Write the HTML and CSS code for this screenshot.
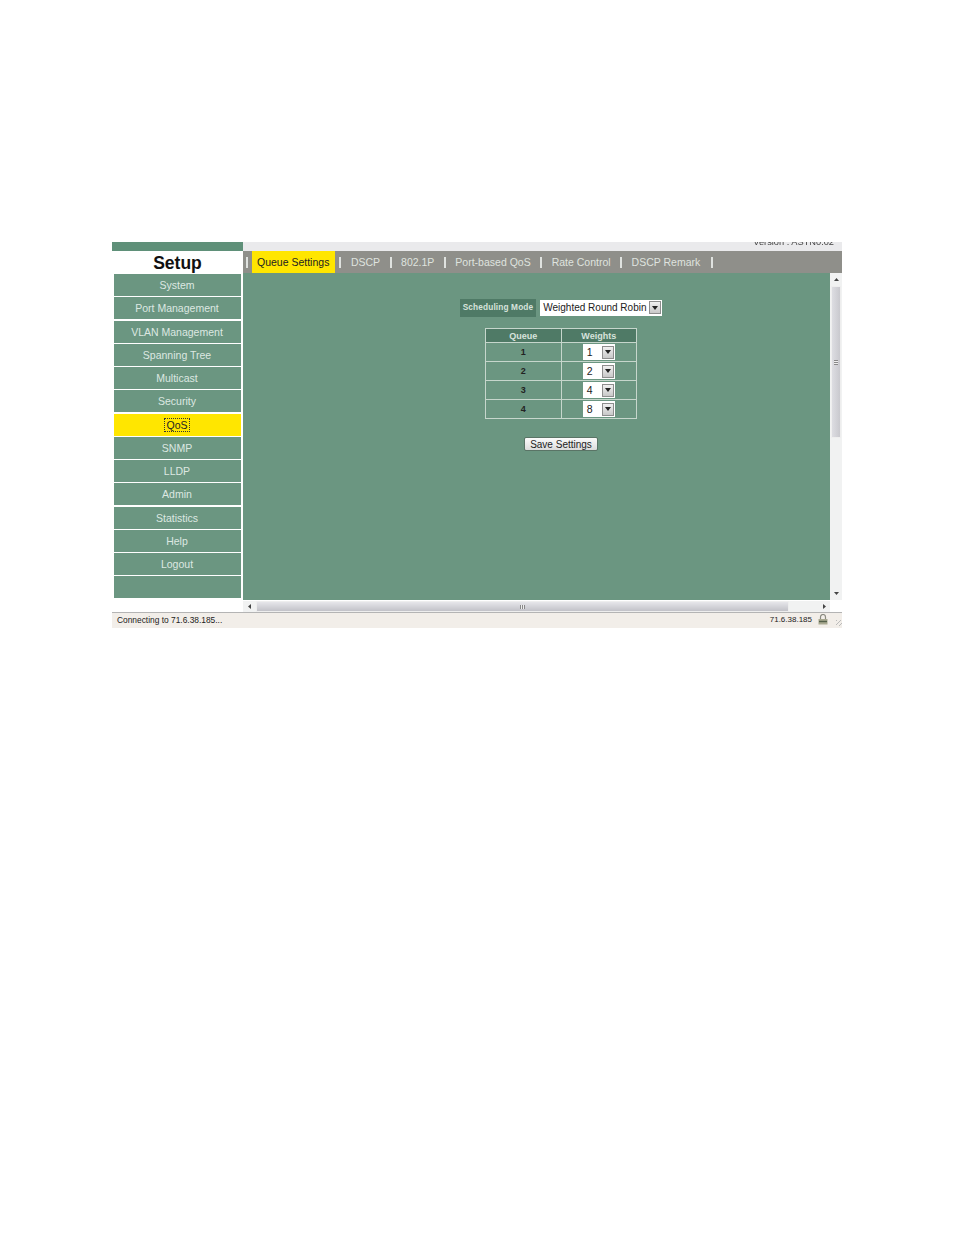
FILE: index.html
```html
<!DOCTYPE html>
<html lang="en">
<head>
<meta charset="utf-8">
<title>Setup - QoS</title>
<link rel="stylesheet" href="styles.css">
</head>
<body>
<div class="window">
  <div class="frame">
    <aside class="side">
      <div class="side-top"></div>
      <h1 class="title">Setup</h1>
      <ul class="menu">
        <li class="item">System</li>
        <li class="item">Port Management</li>
        <li class="item">VLAN Management</li>
        <li class="item">Spanning Tree</li>
        <li class="item">Multicast</li>
        <li class="item">Security</li>
        <li class="item active"><span class="focus">QoS</span></li>
        <li class="item">SNMP</li>
        <li class="item">LLDP</li>
        <li class="item">Admin</li>
        <li class="item">Statistics</li>
        <li class="item">Help</li>
        <li class="item">Logout</li>
        <li class="item">&nbsp;</li>
      </ul>
    </aside>
    <div class="right">
      <div class="version"><span>Version : ASTN0.02</span></div>
      <nav class="tabs">
        <span class="sep first"></span>
        <span class="tab current">Queue Settings</span>
        <span class="sep"></span>
        <span class="tab">DSCP</span>
        <span class="sep"></span>
        <span class="tab">802.1P</span>
        <span class="sep"></span>
        <span class="tab">Port-based QoS</span>
        <span class="sep"></span>
        <span class="tab">Rate Control</span>
        <span class="sep"></span>
        <span class="tab last">DSCP Remark</span>
        <span class="sep"></span>
      </nav>
      <div class="view">
        <div class="view-row">
          <main class="content">
            <div class="inner">
              <div class="mode">
                <span class="mode-label">Scheduling Mode</span>
                <div class="select wide"><span class="value">Weighted Round Robin</span><span class="arrow"><svg viewBox="0 0 6 4" width="6" height="4"><path d="M0 0h6L3 4z"/></svg></span></div>
              </div>
              <table class="queues">
                <thead>
                  <tr><th>Queue</th><th>Weights</th></tr>
                </thead>
                <tbody>
                  <tr><td>1</td><td><div class="select small"><span class="value">1</span><span class="arrow"><svg viewBox="0 0 6 4" width="6" height="4"><path d="M0 0h6L3 4z"/></svg></span></div></td></tr>
                  <tr><td>2</td><td><div class="select small"><span class="value">2</span><span class="arrow"><svg viewBox="0 0 6 4" width="6" height="4"><path d="M0 0h6L3 4z"/></svg></span></div></td></tr>
                  <tr><td>3</td><td><div class="select small"><span class="value">4</span><span class="arrow"><svg viewBox="0 0 6 4" width="6" height="4"><path d="M0 0h6L3 4z"/></svg></span></div></td></tr>
                  <tr><td>4</td><td><div class="select small"><span class="value">8</span><span class="arrow"><svg viewBox="0 0 6 4" width="6" height="4"><path d="M0 0h6L3 4z"/></svg></span></div></td></tr>
                </tbody>
              </table>
              <button class="save" type="button">Save Settings</button>
            </div>
          </main>
          <div class="vscroll">
            <span class="sb-btn"><svg viewBox="0 0 5 3" width="5" height="3"><path d="M0 3h5L2.5 0z"/></svg></span>
            <span class="vthumb"><span class="grip-v"></span></span>
            <span class="sb-btn end"><svg viewBox="0 0 5 3" width="5" height="3"><path d="M0 0h5L2.5 3z"/></svg></span>
          </div>
        </div>
        <div class="hscroll">
          <span class="sb-btn"><svg viewBox="0 0 3 5" width="3" height="5"><path d="M3 0v5L0 2.5z"/></svg></span>
          <span class="hthumb"><span class="grip-h"></span></span>
          <span class="sb-btn end"><svg viewBox="0 0 3 5" width="3" height="5"><path d="M0 0v5L3 2.5z"/></svg></span>
        </div>
      </div>
    </div>
  </div>
  <footer class="status">
    <span class="status-text">Connecting to 71.6.38.185...</span>
    <span class="status-ip">71.6.38.185</span>
    <svg class="lock" viewBox="0 0 10 11" width="10" height="11"><path d="M2.5 5V3a2.5 2.5 0 0 1 5 0v2" fill="none" stroke="#8a8a80" stroke-width="1.2"/><rect x="0.5" y="5" width="9" height="5.5" fill="#a8a890"/><path d="M1 7.5h8" stroke="#55604a" stroke-width="1.4"/></svg>
    <span class="resize"></span>
  </footer>
</div>
</body>
</html>
```
FILE: styles.css
```css
* { box-sizing: border-box; }
html, body { margin: 0; padding: 0; background: #fff; }
body { padding: 242px 0 0 112px; font-family: "Liberation Sans", Arial, sans-serif; }

.window { width: 730px; height: 386px; display: flex; flex-direction: column; overflow: hidden; filter: blur(0.3px); }
.frame { display: flex; height: 370px; }

/* Left column */
.side { width: 131px; background: #fff; display: flex; flex-direction: column; }
.side-top { height: 9px; background: #5f9079; }
.title { margin: 0; height: 23px; line-height: 25px; text-align: center; font-size: 17.5px; font-weight: bold; color: #111; }
.menu { list-style: none; margin: 0; padding: 0 2px 0 2px; display: flex; flex-direction: column; gap: 1.25px; }
.item { height: 22px; line-height: 23px; background: #6b9681; color: #dde8e1; font-size: 10.5px; text-align: center; padding-right: 1px; }
.item.active { background: #ffe600; color: #222; }
.focus { border: 1px dotted #333; padding: 0 1px; }

/* Right column */
.right { width: 599px; display: flex; flex-direction: column; }
.version { height: 9px; background: #eaeaec; overflow: hidden; display: flex; justify-content: flex-end; align-items: flex-end; padding: 0 8px 3px 0; font-size: 9.25px; color: #444; }
.version span { line-height: 12px; flex: none; }
.tabs { height: 22px; background: #8f8f8a; display: flex; align-items: center; color: #dfe3df; font-size: 10.5px; }
.sep { width: 2px; height: 11px; background: #dfe2df; flex: none; }
.sep.first { margin: 0 4px 0 3px; }
.tab { padding: 0 9.5px; line-height: 22px; white-space: nowrap; }
.tab.last { padding-right: 10.5px; }
.tab.current { background: #ffe600; color: #222; padding: 0 6px 0 5px; margin-right: 4px; }

.view { height: 339px; display: flex; flex-direction: column; }
.view-row { display: flex; height: 327px; }
.content { width: 587px; background: #6b9681; overflow: hidden; }
.inner { width: 636px; padding-top: 25px; display: flex; flex-direction: column; align-items: center; }

.mode { display: flex; align-items: center; gap: 4px; height: 19px; }
.mode-label { height: 18px; line-height: 18px; background: #4f7a66; color: #d7e3dc; font-size: 8.25px; font-weight: bold; padding: 0 3px; letter-spacing: 0.15px; white-space: nowrap; }
.select { background: #fff; display: flex; align-items: center; color: #222; white-space: nowrap; }
.select.wide { width: 122px; height: 16px; font-size: 10px; padding: 0 1px 0 3px; justify-content: space-between; }
.select.small { width: 32px; height: 16px; font-size: 10.5px; padding: 0 1px 0 4px; justify-content: space-between; }
.arrow { width: 12px; height: 13px; flex: none; background: linear-gradient(#f0f0f0, #c8c8c8); border: 1px solid #8d8d8d; display: flex; align-items: center; justify-content: center; }
.arrow svg { fill: #222; }

.queues { margin-top: 11px; width: 152px; height: 91px; border-collapse: collapse; table-layout: fixed; border: 1px solid #d6e2da; }
.queues th { height: 14px; padding: 0; background: #4f7a66; color: #d7e3dc; font-size: 9px; font-weight: bold; border: 1px solid #c6d6cc; }
.queues td { height: 19px; padding: 0; text-align: center; font-size: 9px; font-weight: bold; color: #222; border: 1px solid #c6d6cc; }
.queues .select { margin: 0 auto; font-weight: normal; }

.save { margin-top: 18px; width: 74px; height: 14px; padding: 0; background: linear-gradient(#fbfbfb, #dcdcdc); border: 1px solid #5a7466; border-radius: 2px; font: 10px "Liberation Sans", Arial, sans-serif; color: #222; }

/* Scrollbars */
.vscroll { width: 12px; background: #f1f2f2; display: flex; flex-direction: column; align-items: center; }
.hscroll { height: 12px; background: #f1f2f2; display: flex; align-items: center; width: 587px; border-top: 1px solid #fff; }
.sb-btn { flex: none; width: 12px; height: 12px; display: flex; align-items: center; justify-content: center; }
.sb-btn svg { fill: #444; }
.vscroll .end { margin-top: auto; height: 14px; }
.hscroll .end { margin-left: auto; }
.vthumb { margin-top: 1px; width: 10px; height: 152px; background: linear-gradient(90deg, #dddde2, #c9c9ce); border: 1px solid #eee; display: flex; align-items: center; justify-content: center; }
.grip-v { width: 4px; height: 5px; background: repeating-linear-gradient(#888 0 1px, #eee 1px 2px); }
.hthumb { margin-left: 1px; width: 533px; height: 11px; background: linear-gradient(#e6e6ea, #c2c2c8); border: 1px solid #eee; display: flex; align-items: center; justify-content: center; }
.grip-h { width: 5px; height: 4px; background: repeating-linear-gradient(90deg, #888 0 1px, #eee 1px 2px); }

/* Status bar */
.status { height: 16px; background: #f2eee9; border-top: 1px solid #b4b4b4; display: flex; align-items: center; font-size: 8.4px; color: #222; padding: 0 0 2px 5px; }
.status-text { flex: 1; }
.status-ip { margin-right: 6px; font-size: 8px; }
.lock { flex: none; }
.resize { width: 6px; height: 6px; margin: 7px 0 0 8px; background: repeating-linear-gradient(135deg, #bbb 0 1px, transparent 1px 3px); }
```
